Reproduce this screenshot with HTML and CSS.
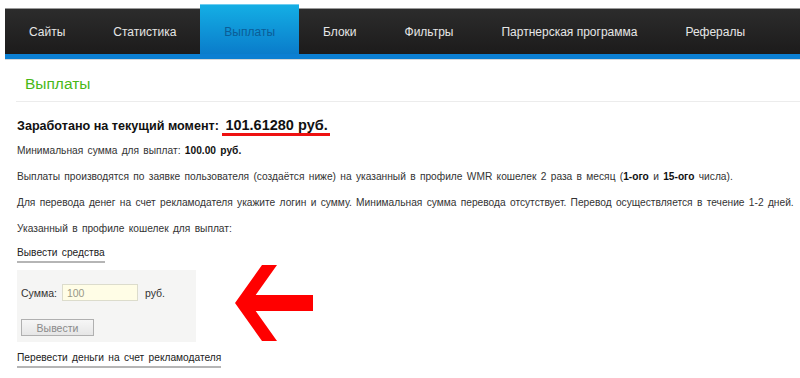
FILE: index.html
```html
<!DOCTYPE html>
<html lang="ru">
<head>
<meta charset="utf-8">
<title>Выплаты</title>
<link rel="stylesheet" href="styles.css">
</head>
<body>
<div class="page">
  <nav class="nav">
    <a class="tab">Сайты</a>
    <a class="tab">Статистика</a>
    <a class="tab active">Выплаты</a>
    <a class="tab">Блоки</a>
    <a class="tab">Фильтры</a>
    <a class="tab">Партнерская программа</a>
    <a class="tab">Рефералы</a>
  </nav>
  <div class="title">Выплаты</div>
  <div class="content">
    <h2 class="earned">Заработано на текущий момент: <span class="amount">101.61280 руб.</span></h2>
    <p class="text">Минимальная сумма для выплат: <b>100.00 руб.</b></p>
    <p class="text">Выплаты производятся по заявке пользователя (создаётся ниже) на указанный в профиле WMR кошелек 2 раза в месяц (<b>1-ого</b> и <b>15-ого</b> числа).</p>
    <p class="text">Для перевода денег на счет рекламодателя укажите логин и сумму. Минимальная сумма перевода отсутствует. Перевод осуществляется в течение 1-2 дней.</p>
    <p class="text">Указанный в профиле кошелек для выплат:</p>
    <div class="section-link">Вывести средства</div>
    <div class="form-box">
      <div class="form-row">
        <label class="label">Сумма:</label>
        <input class="input" type="text" value="100">
        <span class="unit">руб.</span>
      </div>
      <button class="btn">Вывести</button>
    </div>
    <div class="section-link">Перевести деньги на счет рекламодателя</div>
    <svg class="arrow" width="80" height="78" viewBox="0 0 80 78">
      <polygon fill="#ff0000" points="0,38 27,0 42,0 20.7,30 78,30 78,46 20.7,46 42,76 27,76"/>
    </svg>
  </div>
</div>
</body>
</html>
```
FILE: styles.css
```css
html, body {
  margin: 0;
  padding: 0;
  background: #ffffff;
}
body {
  font-family: "Liberation Sans", Arial, sans-serif;
  color: #333333;
}
.page {
  width: 800px;
  height: 378px;
  overflow: hidden;
}
.nav {
  margin: 8px 0 0 5px;
  height: 45px;
  display: flex;
  align-items: flex-end;
  background: linear-gradient(#2c2c2c, #1c1b1b);
  border-top: 1px solid #9a9a9a;
  border-bottom: 5px solid #0b7fd2;
  box-shadow: 0 1px 0 #d8d8d8;
}
.tab {
  flex: none;
  height: 45px;
  display: flex;
  align-items: center;
  padding: 0 24px;
  font-size: 12px;
  white-space: nowrap;
  color: #e6e6e6;
  text-decoration: none;
}
.tab.active {
  margin-top: -5px;
  padding-top: 5px;
  box-sizing: border-box;
  height: 50px;
  background: linear-gradient(#14aee4, #0a7ccb);
  color: #0b5d97;
  border-top: 1px solid #6fcdf0;
}
.title {
  margin: 14px 0 0 16px;
  padding: 0 0 7px 9px;
  font-size: 15.5px;
  line-height: 21px;
  color: #48b817;
  border-bottom: 1px solid #ececec;
}
.content {
  position: relative;
  padding: 14px 0 0 17px;
}
.earned {
  margin: 0 0 7px;
  font-size: 12.6px;
  line-height: 20px;
  font-weight: bold;
  color: #111111;
  white-space: nowrap;
}
.amount {
  font-size: 14.5px;
  display: inline-block;
  padding: 0 2px 0 3px;
  border-bottom: 3px solid #ee1111;
  line-height: 16px;
}
.text {
  margin: 0 0 11px;
  font-size: 10.2px;
  line-height: 15px;
  word-spacing: 1.5px;
  white-space: nowrap;
  color: #333333;
}
.text b {
  color: #111111;
}
.section-link {
  width: max-content;
  margin-top: -2px;
  font-size: 10.2px;
  line-height: 15px;
  word-spacing: 1.5px;
  padding-bottom: 1px;
  border-bottom: 2px solid #b5b5b5;
  color: #222222;
}
.form-box {
  width: 179px;
  height: 72px;
  box-sizing: border-box;
  margin: 7px 0 10px;
  padding: 14px 0 0 4px;
  background: #f5f5f4;
}
.form-row {
  display: flex;
  align-items: center;
  height: 17px;
  font-size: 10.5px;
  color: #333333;
}
.label {
  margin-right: 5px;
}
.input {
  width: 76px;
  height: 17px;
  box-sizing: border-box;
  margin: 0 7px 0 0;
  padding: 0 4px;
  border: 1px solid #dcdccc;
  background: #fffde6;
  font-family: "Liberation Sans", Arial, sans-serif;
  font-size: 10.5px;
  color: #999988;
}
.btn {
  display: block;
  margin-top: 18px;
  width: 73px;
  height: 17px;
  box-sizing: border-box;
  padding: 0;
  border: 1px solid #b0b0b0;
  background: linear-gradient(#f6f6f6, #e6e6e6);
  font-family: "Liberation Sans", Arial, sans-serif;
  font-size: 10.5px;
  color: #8a8a8a;
}
.arrow {
  position: absolute;
  left: 235px;
  top: 163px;
}
```
